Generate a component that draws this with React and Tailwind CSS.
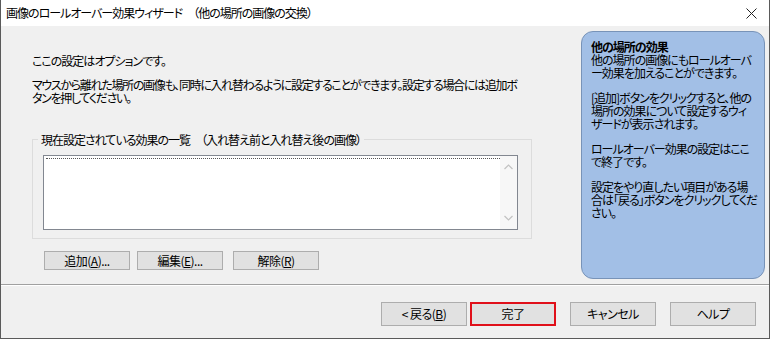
import React from "react";

const font = {
  fontFamily: '"Noto Sans CJK JP", "Noto Sans", sans-serif',
};

function Btn({ children, className = "" }) {
  return (
    <div
      className={
        "flex items-center justify-center bg-[#e1e1e1] border border-[#adadad] text-[12px] leading-none tracking-[-0.5px] text-black " +
        className
      }
    >
      {children}
    </div>
  );
}

export default function App() {
  return (
    <div
      className="w-[770px] h-[339px] flex flex-col bg-[#f0f0f0] border-l border-r border-b border-[#5a5a5a] [font-feature-settings:'palt'] tracking-[-1px] text-black"
      style={font}
    >
      {/* title bar */}
      <div className="h-[26px] bg-white flex items-center justify-between pl-[5px] pr-[10px] shrink-0">
        <span className="text-[12px] leading-none whitespace-nowrap">
          画像のロールオーバー効果ウィザード　（他の場所の画像の交換）
        </span>
        <svg width="11" height="11" viewBox="0 0 11 11" className="mr-[2px]">
          <path d="M0.5 0.5 L10.5 10.5 M10.5 0.5 L0.5 10.5" stroke="#222" strokeWidth="1" />
        </svg>
      </div>

      {/* body */}
      <div className="h-[258px] flex shrink-0">
        <div className="flex-1 pl-[31px] pt-[28px] text-[12px] leading-[13px]">
          <div className="whitespace-nowrap">ここの設定はオプションです。</div>
          <div className="mt-[11px] whitespace-nowrap tracking-[-1.3px]">
            マウスから離れた場所の画像も、同時に入れ替わるように設定することができます。設定する場合には追加ボ
            <br />
            タンを押してください。
          </div>
          <fieldset className="mt-[29px] w-[500px] border border-[#dcdcdc] pb-[8px]">
            <legend className="ml-[5px] px-[3px] whitespace-nowrap text-[12px] leading-[13px]">
              現在設定されている効果の一覧　（入れ替え前と入れ替え後の画像）
            </legend>
            <div className="ml-[10px] mt-[9px] w-[475px] h-[75px] bg-white border border-[#828790] flex">
              <div className="flex-1 border-t border-dotted border-[#555] h-0 mt-[2px] ml-[2px]" />
              <div className="w-[17px] h-full bg-[#f7f7f7] flex flex-col items-center justify-between py-[8px]">
                <svg width="9" height="6" viewBox="0 0 9 6">
                  <path d="M0.5 5 L4.5 1 L8.5 5" fill="none" stroke="#c2c2c2" strokeWidth="1.2" />
                </svg>
                <svg width="9" height="6" viewBox="0 0 9 6">
                  <path d="M0.5 1 L4.5 5 L8.5 1" fill="none" stroke="#c2c2c2" strokeWidth="1.2" />
                </svg>
              </div>
            </div>
          </fieldset>
          <div className="flex mt-[12px] ml-[12px]">
            <Btn className="w-[86px] h-[19px]">
              追加(<span className="underline">A</span>)...
            </Btn>
            <Btn className="w-[86px] h-[19px] ml-[7px]">
              編集(<span className="underline">E</span>)...
            </Btn>
            <Btn className="w-[86px] h-[19px] ml-[10px]">
              解除(<span className="underline">R</span>)
            </Btn>
          </div>
        </div>

        <div className="w-[184px] h-[248px] mt-[5px] mr-[4px] rounded-[12px] bg-[#a2bfe6] border border-[#7893b8] pl-[9px] pt-[8px] text-[12px] leading-[13px] whitespace-nowrap">
          <div className="font-bold">他の場所の効果</div>
          <div>
            他の場所の画像にもロールオーバ
            <br />
            ー効果を加えることができます。
          </div>
          <div className="mt-[12px]">
            [追加]ボタンをクリックすると、他の
            <br />
            場所の効果について設定するウィ
            <br />
            ザードが表示されます。
          </div>
          <div className="mt-[12px]">
            ロールオーバー効果の設定はここ
            <br />
            で終了です。
          </div>
          <div className="mt-[12px]">
            設定をやり直したい項目がある場
            <br />
            合は「戻る」ボタンをクリックしてくだ
            <br />
            さい。
          </div>
        </div>
      </div>

      {/* separator */}
      <div className="h-[1px] bg-[#a0a0a0] shrink-0" />
      <div className="h-[1px] bg-white shrink-0" />

      {/* bottom */}
      <div className="flex-1 flex justify-end items-start pt-[16px] pr-[13px]">
        <Btn className="w-[86px] h-[24px]">
          &lt;&nbsp;戻る(<span className="underline">B</span>)
        </Btn>
        <Btn className="w-[86px] h-[24px] ml-[3px] border-2 border-[#e0101a]">完了</Btn>
        <Btn className="w-[86px] h-[24px] ml-[14px]">キャンセル</Btn>
        <Btn className="w-[86px] h-[24px] ml-[14px]">ヘルプ</Btn>
      </div>
    </div>
  );
}
